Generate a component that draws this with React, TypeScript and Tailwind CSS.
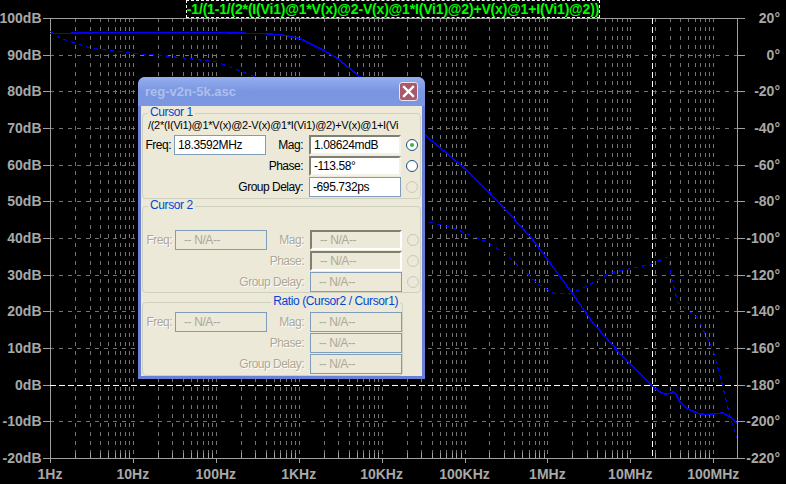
const X0 = 50, DEC = 82.9, R = 737, T = 18, B = 458, STEP = 36.67;
const decades = ["1Hz","10Hz","100Hz","1KHz","10KHz","100KHz","1MHz","10MHz","100MHz"];
const dbs = [100,90,80,70,60,50,40,30,20,10,0,-10,-20];
const degs = [20,0,-20,-40,-60,-80,-100,-120,-140,-160,-180,-200,-220];
const MULT = [1,2,3,4,5,6,7,8,9];
const logX: {x:number;major:boolean}[] = [];
for (let d = 0; d < 9; d++) for (const m of MULT) {
  const x = X0 + (d + Math.log10(m)) * DEC;
  if (x < R) logX.push({ x: Math.round(x) + 0.5, major: m === 1 });
}
const toPts = (a: number[][]) => a.map(p => p.join(",")).join(" ");
const mag = [[50,33.5],[92,33],[92,32.5],[227,32.5],[227,33],[263,33.5],[283,35],[300,38.5],[323,50],[337,58],[360,77],[425,135],[463,167],[490,193],[515,220],[533,240],[553,267],[572,293],[593,323],[615,348],[652,386],[660,392],[665,394],[670,393.5],[673,392],[676,394],[680,402],[688,409],[700,414],[707,414.5],[723,413],[730,417],[737,423]];
const phase = [[50,31],[60,38],[75,43],[90,48],[113,51],[140,54],[167,56],[217,62],[253,76],[300,110],[425,221],[453,228],[487,242],[503,252],[520,267],[537,283],[553,293],[570,294],[587,286],[610,273],[652,264],[667,257],[669,260],[672,280],[678,303],[697,317],[713,350],[723,387],[730,417],[737,438]];

function Chart() {
  const g = "#747474", a = "#a0a0a0";
  const font = { fontFamily: '"Liberation Sans", sans-serif', fontWeight: 700, fontSize: 14 };
  return (
    <svg className="absolute inset-0" width={786} height={484} viewBox="0 0 786 484">
      <g shapeRendering="crispEdges" fill="none">
        {logX.map(l => <line key={l.x} x1={l.x} x2={l.x} y1={T} y2={B} stroke={g} strokeDasharray="4 5" />)}
        {dbs.map((d, i) => <line key={d} x1={X0} x2={R} y1={Math.round(T + i * STEP) + 0.5} y2={Math.round(T + i * STEP) + 0.5} stroke={g} strokeDasharray="4 5" />)}
        <path d={`M50.5 18.5H737.5V458.5H50.5Z`} stroke={a} />
        {dbs.map((d, i) => { const y = Math.round(T + i * STEP) + 0.5; return <g key={d}><line x1={43} x2={50} y1={y} y2={y} stroke={a} /><line x1={737} x2={745} y1={y} y2={y} stroke={a} /></g>; })}
        {logX.map(l => <line key={l.x} x1={l.x} x2={l.x} y1={l.major ? 463 : 458} y2={l.major ? 458 : 453} stroke={a} />)}
        <line x1={50} x2={737} y1={385.5} y2={385.5} stroke="#fff" strokeDasharray="6 3" />
        <line x1={652.5} x2={652.5} y1={18} y2={458} stroke="#fff" strokeDasharray="6 3" />
      </g>
      <polyline points={toPts(mag)} fill="none" stroke="#0000ff" strokeWidth={1.5} shapeRendering="crispEdges" />
      <polyline points={toPts(phase)} fill="none" stroke="#0000ff" strokeWidth={1.1} strokeDasharray="4 4" shapeRendering="crispEdges" />
      <g fill="#a8a8a8" style={font}>
        {dbs.map((d, i) => <text key={d} x={41.5} y={T + i * STEP + 5} textAnchor="end">{d}dB</text>)}
        {degs.map((d, i) => <text key={d} x={780} y={T + i * STEP + 5} textAnchor="end">{d}°</text>)}
        {decades.map((d, i) => <text key={d} x={X0 + i * DEC} y={479} textAnchor="middle">{d}</text>)}
      </g>
    </svg>
  );
}

function Field({ value, sunken, disabled, className = "" }: { value: string; sunken?: boolean; disabled?: boolean; className?: string }) {
  const look = disabled && !sunken
    ? "border border-[#7f9db9] bg-[#ece9d8] text-[#aca899] pl-[8px]"
    : sunken && disabled
      ? "border-2 border-t-[#808070] border-l-[#808070] border-r-white border-b-white bg-[#ece9d8] text-[#aca899] pl-[8px]"
      : sunken
        ? "border-2 border-t-[#808070] border-l-[#808070] border-r-[#f4f2e8] border-b-[#f4f2e8] bg-white text-black pl-[3px]"
        : "border border-[#7f9db9] bg-white text-black pl-[3px]";
  return <div className={`h-[20px] flex items-center leading-none text-[12px] tracking-[-0.4px] ${look} ${className}`}>{value}</div>;
}

function Radio({ on, disabled }: { on?: boolean; disabled?: boolean }) {
  return (
    <div className={`justify-self-center self-center w-[12px] h-[12px] rounded-full border flex items-center justify-center ${disabled ? "border-[#cac8bb]" : "border-[#1c5180] bg-white"}`}>
      {on && <div className="w-[4px] h-[4px] rounded-full bg-[#38b34a]" />}
    </div>
  );
}

function Label({ text, disabled, className }: { text: string; disabled?: boolean; className: string }) {
  return <div className={`self-center text-right text-[12px] tracking-[-0.5px] whitespace-nowrap ${disabled ? "text-[#aca899] [text-shadow:1px_1px_0_#fff]" : "text-black"} ${className}`}>{text}</div>;
}

function Fields({ freq, mag, phase, delay, sunken, disabled, radios = true, on }: { freq: string; mag: string; phase: string; delay: string; sunken?: boolean; disabled?: boolean; radios?: boolean; on?: boolean }) {
  return (
    <div className="grid grid-cols-[30px_92px_43px_92px_21px] grid-rows-[20px_20px_20px] gap-y-[1px]">
      <Label text="Freq:" disabled={disabled} className="pr-[3px]" />
      <Field value={freq} disabled={disabled} />
      <Label text="Mag:" disabled={disabled} className="pr-[6px]" />
      <Field value={mag} sunken={sunken} disabled={disabled} />
      {radios ? <Radio on={on} disabled={disabled} /> : <div />}
      <Label text="Phase:" disabled={disabled} className="col-span-3 pr-[6px]" />
      <Field value={phase} sunken={sunken} disabled={disabled} />
      {radios ? <Radio disabled={!on} /> : <div />}
      <Label text="Group Delay:" disabled={disabled} className="col-span-3 pr-[6px]" />
      <Field value={delay} disabled={disabled} />
      {radios ? <Radio disabled /> : <div />}
    </div>
  );
}

function Group({ title, right, className, children }: { title: string; right?: boolean; className: string; children: React.ReactNode }) {
  return (
    <div className={`relative border border-[#d0d0bf] rounded-[4px] ${className}`}>
      <span className={`absolute top-[-8px] leading-[13px] text-[12px] tracking-[-0.4px] text-[#0046d5] bg-[#ece9d8] px-[2px] whitespace-nowrap ${right ? "right-[2px]" : "left-[5px]"}`}>{title}</span>
      {children}
    </div>
  );
}

function Dialog() {
  const na = "-- N/A--";
  return (
    <div className="absolute left-[138px] top-[77px] w-[287px] h-[302px] flex flex-col rounded-t-[7px] bg-[#6a7fd6] p-[3px] pt-0 text-[12px]" style={{ fontFamily: '"Liberation Sans", sans-serif' }}>
      <div className="h-[29px] -mx-[3px] px-[7px] flex items-center justify-between rounded-t-[7px] bg-gradient-to-b from-[#94aef0] via-[#7b96e0] to-[#7c97e2]">
        <span className="text-[13px] font-bold text-[#aebfee]">reg-v2n-5k.asc</span>
        <div className="w-[19px] h-[19px] rounded-[3px] border border-[#e8e4ea] bg-[#a85a6c] flex items-center justify-center">
          <svg width="13" height="13" viewBox="0 0 13 13"><path d="M2 2L11 11M11 2L2 11" stroke="#fff" strokeWidth="2.4" strokeLinecap="square" /></svg>
        </div>
      </div>
      <div className="flex-1 bg-[#ece9d8] pt-[7px] pl-[1px] pr-[1px] flex flex-col">
        <Group title="Cursor 1" className="h-[86px] pl-[1px]">
          <div className="h-[21px] pl-[4px] pt-[5px] leading-[13px] whitespace-nowrap text-black text-[11px] tracking-[-0.3px]">/(2*(I(Vi1)@1*V(x)@2-V(x)@1*I(Vi1)@2)+V(x)@1+I(Vi</div>
          <Fields freq="18.3592MHz" mag="1.08624mdB" phase="-113.58°" delay="-695.732ps" sunken on />
        </Group>
        <Group title="Cursor 2" className="h-[87px] mt-[7px] pl-[2px] pt-[23px]">
          <Fields freq={na} mag={na} phase={na} delay={na} sunken disabled />
        </Group>
        <Group title="Ratio (Cursor2 / Cursor1)" right className="h-[74px] w-[261px] mt-[9px] pl-[2px] pt-[9px]">
          <Fields freq={na} mag={na} phase={na} delay={na} disabled radios={false} />
        </Group>
      </div>
    </div>
  );
}

export default function App() {
  return (
    <div className="relative w-[786px] h-[484px] bg-black overflow-hidden">
      <Chart />
      <div className="absolute left-[186px] top-0 h-[18px] w-[414px] border border-dashed border-white flex items-center justify-center text-[14px] tracking-[-0.18px] font-bold text-[#00ff00] whitespace-nowrap" style={{ fontFamily: '"Liberation Sans", sans-serif' }}>
        -1/(1-1/(2*(I(Vi1)@1*V(x)@2-V(x)@1*I(Vi1)@2)+V(x)@1+I(Vi1)@2))
      </div>
      <Dialog />
    </div>
  );
}
